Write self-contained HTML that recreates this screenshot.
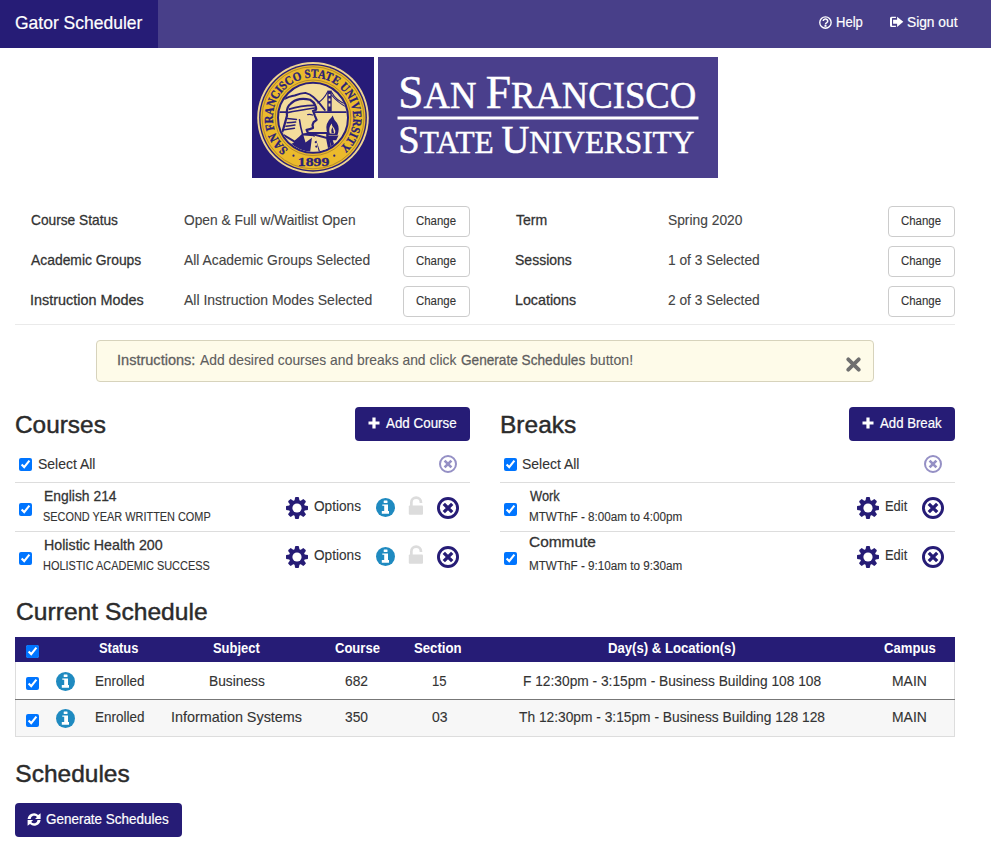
<!DOCTYPE html><html><head><meta charset="utf-8"><title>Gator Scheduler</title><style>
html,body{margin:0;padding:0;background:#fff;width:991px;height:846px;overflow:hidden;position:relative;font-family:"Liberation Sans",sans-serif}
.t{position:absolute;white-space:nowrap;font-family:"Liberation Sans",sans-serif}
.bx{position:absolute;box-sizing:border-box}
</style></head><body>
<div class="bx" style="left:0;top:0;width:991px;height:48px;background:#483f89"></div>
<div class="bx" style="left:0;top:0;width:158px;height:48px;background:#261c76"></div>
<svg style="position:absolute;left:819px;top:15.5px" width="13" height="13" viewBox="0 0 13 13"><circle cx="6.45" cy="6.5" r="5.7" fill="none" stroke="#fff" stroke-width="1.35"/><path d="M4.2 5.0a2.25 2.1 0 1 1 3.3 1.9c-0.7 0.4-1 0.7-1 1.5" fill="none" stroke="#fff" stroke-width="1.6"/><rect x="5.5" y="9.0" width="2" height="1.8" fill="#fff"/></svg>
<svg style="position:absolute;left:890px;top:16px" width="14" height="12" viewBox="0 0 14 12"><path d="M5.9 0.8H1.5Q0 0.8 0 2.3V9.4Q0 10.9 1.5 10.9H5.9V9.7H2.5Q2 9.7 2 9.2V2.5Q2 2 2.5 2H5.9Z" fill="#fff"/><path d="M3.1 3.8H7.1V0.8L13.3 5.85L7.1 10.9V7.8H3.1Z" fill="#fff"/></svg>
<div class="bx" style="left:252px;top:57px;width:466px;height:121px;background:#fff"></div>
<div class="bx" style="left:252px;top:57px;width:122px;height:121px;background:#261a78"></div>
<div class="bx" style="left:378px;top:57px;width:340px;height:121px;background:#4a3f8c"></div>
<svg style="position:absolute;left:252px;top:57px" width="122" height="121" viewBox="0 0 122 121">
<defs><path id="arcT" d="M36.25 92.48A40.2 40.2 0 1 1 88.42 90.2"/><clipPath id="disk"><circle cx="61" cy="60.8" r="34"/></clipPath></defs>
<rect width="122" height="121" fill="#271b78"/>
<circle cx="61" cy="60.8" r="55.8" fill="#f0d592"/>
<circle cx="61" cy="60.8" r="53.9" fill="#2a1f78"/>
<circle cx="61" cy="60.8" r="52.5" fill="#ebba2c"/>
<circle cx="61" cy="60.8" r="51" fill="none" stroke="#9a7430" stroke-width="0.7"/>
<circle cx="61" cy="60.8" r="37.8" fill="none" stroke="#9a7430" stroke-width="0.7"/>
<text font-family="Liberation Serif" font-weight="bold" font-size="12.4" fill="#2a1f78" stroke="#2a1f78" stroke-width="0.35"><textPath href="#arcT" textLength="196" lengthAdjust="spacingAndGlyphs">SAN FRANCISCO STATE UNIVERSITY</textPath></text>
<circle cx="41.5" cy="98.7" r="1.1" fill="#2a1f78"/><circle cx="82.3" cy="98.7" r="1.1" fill="#2a1f78"/>
<text font-family="Liberation Serif" font-weight="bold" font-size="12.5" fill="#2a1f78" stroke="#2a1f78" stroke-width="0.3" x="45.8" y="108.7" textLength="31.5" lengthAdjust="spacingAndGlyphs">1899</text>
<circle cx="61" cy="60.8" r="35" fill="#f3dc9c" stroke="#2a1f78" stroke-width="2"/>
<g clip-path="url(#disk)" fill="none" stroke="#2a1f78" stroke-linejoin="round" stroke-linecap="round">
<path d="M24 55.1H34.5M62.8 55.1H98" stroke-width="1.8"/>
<path d="M30 43Q38 39 42.7 38.5Q49 36 53.4 35.9Q58 37 61.6 40.3Q67 45 72.8 53" stroke-width="1.9"/>
<rect x="75.3" y="33.6" width="4.4" height="21" fill="#2a1f78" stroke="none"/>
<rect x="76.6" y="37" width="1.8" height="2" fill="#f3dc9c" stroke="none"/><rect x="76.6" y="41.5" width="1.8" height="2.4" fill="#f3dc9c" stroke="none"/><rect x="76.6" y="46.5" width="1.8" height="3" fill="#f3dc9c" stroke="none"/>
<path d="M75.5 35Q72 42 65.8 46M79.5 35Q84 44 96 48M79.5 38Q86 46 96 51" stroke-width="1.1"/>
<path d="M28 80L30.9 73.4Q33 66 35 58.6Q34 50 38.6 46.8Q42 43 47.5 42.1Q53 41.5 58.1 42.7Q62 45 63.4 48.6Q64.5 51 64 52.7L61 53.9Q62 56 62.8 58.6Q63.8 60.8 64.6 62.8Q63 64 61.6 65.1Q61 66.5 60.5 68.1Q61 69.5 61 71.1Q58 72.5 54.6 72.8L56 76L75 76L80 100H24Z" fill="#f3dc9c" stroke-width="2.2"/>
<path d="M35.6 55.6Q45 53.6 62.8 51M37.4 52.1Q48 48.6 62.8 48.3" stroke-width="1.7"/>
<path d="M55.7 57.6Q58 56.8 60.5 58" stroke-width="1.3"/>
<path d="M47.5 62.8Q48.5 70 50.4 76.4" stroke-width="1.6"/>
<path d="M35.5 61.5Q40 62 44.5 62.5M35 65.8Q39 65.5 43.7 65M34 69.3Q38 68.7 43 68M32.5 72.8Q37 72 42.5 71.2" stroke-width="1.4"/>
<path d="M30 76Q37 80 42.7 83.5Q47 80 50.4 76.4L56 75.8L62 77L70 100H24Z" fill="#2a1f78" stroke="none"/><path d="M62 77.5L75 81L78 96" stroke-width="2"/>
<path d="M33 80L42 85.5L37 88Z" fill="#f3dc9c" stroke="none"/>
<path d="M51.5 78.5L53.5 85.5L62 79.3Z" fill="#f3dc9c" stroke="none"/>
<path d="M60 80L63.5 79.5L67 96H58Z" fill="#f3dc9c" stroke="none"/>
<circle cx="63.8" cy="85.2" r="1.1" fill="#2a1f78" stroke="none"/><circle cx="64.3" cy="89.6" r="1.1" fill="#2a1f78" stroke="none"/>
<path d="M76.2 78Q72 70 77 63Q80 60 80.6 58.5Q82 63 85 66Q88 71 85.5 78Z" fill="#2a1f78" stroke="none"/>
<path d="M77.8 76.5Q76 71 79.7 66.4Q80 70 82 71Q84 74 83 76.5Z" fill="#f3dc9c" stroke="none"/>
<path d="M79.5 76Q79 72 80.5 70Q81.5 73 82 76Z" fill="#2a1f78" stroke="none"/>
<path d="M74 78.4H86.5L84.2 83.3H76.2Z" fill="#2a1f78" stroke="none"/>
<path d="M79 83L82 92" stroke-width="3.2"/>
</g>
</svg>
<svg style="position:absolute;left:378px;top:57px" width="340" height="121" viewBox="0 0 340 121">
<text font-family="Liberation Serif" fill="#fff" stroke="#fff" stroke-width="0.5" y="50.6" textLength="298" lengthAdjust="spacingAndGlyphs" x="20.3"><tspan font-size="47">S</tspan><tspan font-size="38">AN </tspan><tspan font-size="47">F</tspan><tspan font-size="38">RANCISCO</tspan></text>
<rect x="19.5" y="59.5" width="301" height="3" fill="#fff"/>
<text font-family="Liberation Serif" fill="#fff" stroke="#fff" stroke-width="0.5" y="95.8" textLength="296" lengthAdjust="spacingAndGlyphs" x="20.3"><tspan font-size="39.5">S</tspan><tspan font-size="32">TATE </tspan><tspan font-size="39.5">U</tspan><tspan font-size="32">NIVERSITY</tspan></text>
</svg>
<div class="bx" style="left:403px;top:206px;width:67px;height:31px;border:1px solid #cccccc;border-radius:4px;background:#fff"></div>
<div class="bx" style="left:403px;top:246px;width:67px;height:31px;border:1px solid #cccccc;border-radius:4px;background:#fff"></div>
<div class="bx" style="left:403px;top:286px;width:67px;height:31px;border:1px solid #cccccc;border-radius:4px;background:#fff"></div>
<div class="bx" style="left:888px;top:206px;width:67px;height:31px;border:1px solid #cccccc;border-radius:4px;background:#fff"></div>
<div class="bx" style="left:888px;top:246px;width:67px;height:31px;border:1px solid #cccccc;border-radius:4px;background:#fff"></div>
<div class="bx" style="left:888px;top:286px;width:67px;height:31px;border:1px solid #cccccc;border-radius:4px;background:#fff"></div>
<div class="bx" style="left:15px;top:324px;width:940px;height:1px;background:#eaeaea"></div>
<div class="bx" style="left:96px;top:340px;width:778px;height:42px;background:#fefbe9;border:1px solid #d7d3bc;border-radius:4px"></div>
<svg style="position:absolute;left:846px;top:356.5px" width="15" height="15" viewBox="0 0 15 15"><path d="M2.3 2.3L12.7 12.7M12.7 2.3L2.3 12.7" stroke="#6f6f6f" stroke-width="3.8" stroke-linecap="round"/></svg>
<div class="bx" style="left:355px;top:407px;width:115px;height:34px;background:#261c76;border-radius:4px"></div>
<div class="bx" style="left:849px;top:407px;width:106px;height:34px;background:#261c76;border-radius:4px"></div>
<svg style="position:absolute;left:368px;top:416.5px" width="12" height="12" viewBox="0 0 12 12"><path d="M6 0.5V11.5M0.5 6H11.5" stroke="#fff" stroke-width="3.2"/></svg>
<svg style="position:absolute;left:862px;top:416.5px" width="12" height="12" viewBox="0 0 12 12"><path d="M6 0.5V11.5M0.5 6H11.5" stroke="#fff" stroke-width="3.2"/></svg>
<input type="checkbox" checked style="position:absolute;left:19px;top:458px;width:13px;height:13px;margin:0">
<input type="checkbox" checked style="position:absolute;left:504px;top:458px;width:13px;height:13px;margin:0">
<svg style="position:absolute;left:439.0px;top:455.0px" width="18" height="18" viewBox="-9.0 -9.0 18 18"><circle r="8.0" fill="none" stroke="#9590c5" stroke-width="2.0"/><path d="M-3.4 -3.4L3.4 3.4M3.4 -3.4L-3.4 3.4" stroke="#9590c5" stroke-width="2.7" stroke-linecap="butt"/></svg>
<svg style="position:absolute;left:924.0px;top:455.0px" width="18" height="18" viewBox="-9.0 -9.0 18 18"><circle r="8.0" fill="none" stroke="#9590c5" stroke-width="2.0"/><path d="M-3.4 -3.4L3.4 3.4M3.4 -3.4L-3.4 3.4" stroke="#9590c5" stroke-width="2.7" stroke-linecap="butt"/></svg>
<div class="bx" style="left:15px;top:482px;width:455px;height:1px;background:#dddddd"></div>
<div class="bx" style="left:500px;top:482px;width:455px;height:1px;background:#dddddd"></div>
<div class="bx" style="left:15px;top:531px;width:455px;height:1px;background:#dddddd"></div>
<div class="bx" style="left:500px;top:531px;width:455px;height:1px;background:#dddddd"></div>
<input type="checkbox" checked style="position:absolute;left:19px;top:503px;width:13px;height:13px;margin:0">
<input type="checkbox" checked style="position:absolute;left:504px;top:503px;width:13px;height:13px;margin:0">
<svg style="position:absolute;left:286.3px;top:496.9px" width="22" height="22" viewBox="-11 -11 22 22"><g fill="#261c76"><path d="M-2.7 -6L-1.9 -10.8Q0 -11.3 1.9 -10.8L2.7 -6Z" transform="rotate(0)"/><path d="M-2.7 -6L-1.9 -10.8Q0 -11.3 1.9 -10.8L2.7 -6Z" transform="rotate(45)"/><path d="M-2.7 -6L-1.9 -10.8Q0 -11.3 1.9 -10.8L2.7 -6Z" transform="rotate(90)"/><path d="M-2.7 -6L-1.9 -10.8Q0 -11.3 1.9 -10.8L2.7 -6Z" transform="rotate(135)"/><path d="M-2.7 -6L-1.9 -10.8Q0 -11.3 1.9 -10.8L2.7 -6Z" transform="rotate(180)"/><path d="M-2.7 -6L-1.9 -10.8Q0 -11.3 1.9 -10.8L2.7 -6Z" transform="rotate(225)"/><path d="M-2.7 -6L-1.9 -10.8Q0 -11.3 1.9 -10.8L2.7 -6Z" transform="rotate(270)"/><path d="M-2.7 -6L-1.9 -10.8Q0 -11.3 1.9 -10.8L2.7 -6Z" transform="rotate(315)"/><circle r="8"/></g><circle r="4.6" fill="#fff"/></svg>
<svg style="position:absolute;left:376.0px;top:497.7px" width="19" height="19" viewBox="-9.5 -9.5 19 19"><circle r="9.5" fill="#1f8ac0"/><rect x="-1.8" y="-7" width="3.8" height="2.5" rx="0.5" fill="#fff"/><path d="M-3.2 -3.1H2.5V3.6H3.5V6.2H-3.7V3.6H-1.3V-1.7H-3.2Z" fill="#fff"/></svg>
<svg style="position:absolute;left:408px;top:495px" width="16" height="21" viewBox="0 0 16 21"><path d="M3.35 11V7.45A4.8 4.8 0 0 1 12.95 7.45V8" fill="none" stroke="#dcdcdc" stroke-width="2.7"/><rect x="0.8" y="10.4" width="14.2" height="9.4" rx="1" fill="#dcdcdc"/></svg>
<svg style="position:absolute;left:437.0px;top:497.0px" width="22" height="22" viewBox="-11.0 -11.0 22 22"><circle r="9.55" fill="none" stroke="#261c76" stroke-width="2.9"/><path d="M-4.2 -4.2L4.2 4.2M4.2 -4.2L-4.2 4.2" stroke="#261c76" stroke-width="3.3" stroke-linecap="butt"/></svg>
<svg style="position:absolute;left:857px;top:497.2px" width="22" height="22" viewBox="-11 -11 22 22"><g fill="#261c76"><path d="M-2.7 -6L-1.9 -10.8Q0 -11.3 1.9 -10.8L2.7 -6Z" transform="rotate(0)"/><path d="M-2.7 -6L-1.9 -10.8Q0 -11.3 1.9 -10.8L2.7 -6Z" transform="rotate(45)"/><path d="M-2.7 -6L-1.9 -10.8Q0 -11.3 1.9 -10.8L2.7 -6Z" transform="rotate(90)"/><path d="M-2.7 -6L-1.9 -10.8Q0 -11.3 1.9 -10.8L2.7 -6Z" transform="rotate(135)"/><path d="M-2.7 -6L-1.9 -10.8Q0 -11.3 1.9 -10.8L2.7 -6Z" transform="rotate(180)"/><path d="M-2.7 -6L-1.9 -10.8Q0 -11.3 1.9 -10.8L2.7 -6Z" transform="rotate(225)"/><path d="M-2.7 -6L-1.9 -10.8Q0 -11.3 1.9 -10.8L2.7 -6Z" transform="rotate(270)"/><path d="M-2.7 -6L-1.9 -10.8Q0 -11.3 1.9 -10.8L2.7 -6Z" transform="rotate(315)"/><circle r="8"/></g><circle r="4.6" fill="#fff"/></svg>
<svg style="position:absolute;left:921.6px;top:497.0px" width="22" height="22" viewBox="-11.0 -11.0 22 22"><circle r="9.55" fill="none" stroke="#261c76" stroke-width="2.9"/><path d="M-4.2 -4.2L4.2 4.2M4.2 -4.2L-4.2 4.2" stroke="#261c76" stroke-width="3.3" stroke-linecap="butt"/></svg>
<input type="checkbox" checked style="position:absolute;left:19px;top:552px;width:13px;height:13px;margin:0">
<input type="checkbox" checked style="position:absolute;left:504px;top:552px;width:13px;height:13px;margin:0">
<svg style="position:absolute;left:286.3px;top:545.9px" width="22" height="22" viewBox="-11 -11 22 22"><g fill="#261c76"><path d="M-2.7 -6L-1.9 -10.8Q0 -11.3 1.9 -10.8L2.7 -6Z" transform="rotate(0)"/><path d="M-2.7 -6L-1.9 -10.8Q0 -11.3 1.9 -10.8L2.7 -6Z" transform="rotate(45)"/><path d="M-2.7 -6L-1.9 -10.8Q0 -11.3 1.9 -10.8L2.7 -6Z" transform="rotate(90)"/><path d="M-2.7 -6L-1.9 -10.8Q0 -11.3 1.9 -10.8L2.7 -6Z" transform="rotate(135)"/><path d="M-2.7 -6L-1.9 -10.8Q0 -11.3 1.9 -10.8L2.7 -6Z" transform="rotate(180)"/><path d="M-2.7 -6L-1.9 -10.8Q0 -11.3 1.9 -10.8L2.7 -6Z" transform="rotate(225)"/><path d="M-2.7 -6L-1.9 -10.8Q0 -11.3 1.9 -10.8L2.7 -6Z" transform="rotate(270)"/><path d="M-2.7 -6L-1.9 -10.8Q0 -11.3 1.9 -10.8L2.7 -6Z" transform="rotate(315)"/><circle r="8"/></g><circle r="4.6" fill="#fff"/></svg>
<svg style="position:absolute;left:376.0px;top:546.7px" width="19" height="19" viewBox="-9.5 -9.5 19 19"><circle r="9.5" fill="#1f8ac0"/><rect x="-1.8" y="-7" width="3.8" height="2.5" rx="0.5" fill="#fff"/><path d="M-3.2 -3.1H2.5V3.6H3.5V6.2H-3.7V3.6H-1.3V-1.7H-3.2Z" fill="#fff"/></svg>
<svg style="position:absolute;left:408px;top:544px" width="16" height="21" viewBox="0 0 16 21"><path d="M3.35 11V7.45A4.8 4.8 0 0 1 12.95 7.45V8" fill="none" stroke="#dcdcdc" stroke-width="2.7"/><rect x="0.8" y="10.4" width="14.2" height="9.4" rx="1" fill="#dcdcdc"/></svg>
<svg style="position:absolute;left:437.0px;top:546.0px" width="22" height="22" viewBox="-11.0 -11.0 22 22"><circle r="9.55" fill="none" stroke="#261c76" stroke-width="2.9"/><path d="M-4.2 -4.2L4.2 4.2M4.2 -4.2L-4.2 4.2" stroke="#261c76" stroke-width="3.3" stroke-linecap="butt"/></svg>
<svg style="position:absolute;left:857px;top:546.2px" width="22" height="22" viewBox="-11 -11 22 22"><g fill="#261c76"><path d="M-2.7 -6L-1.9 -10.8Q0 -11.3 1.9 -10.8L2.7 -6Z" transform="rotate(0)"/><path d="M-2.7 -6L-1.9 -10.8Q0 -11.3 1.9 -10.8L2.7 -6Z" transform="rotate(45)"/><path d="M-2.7 -6L-1.9 -10.8Q0 -11.3 1.9 -10.8L2.7 -6Z" transform="rotate(90)"/><path d="M-2.7 -6L-1.9 -10.8Q0 -11.3 1.9 -10.8L2.7 -6Z" transform="rotate(135)"/><path d="M-2.7 -6L-1.9 -10.8Q0 -11.3 1.9 -10.8L2.7 -6Z" transform="rotate(180)"/><path d="M-2.7 -6L-1.9 -10.8Q0 -11.3 1.9 -10.8L2.7 -6Z" transform="rotate(225)"/><path d="M-2.7 -6L-1.9 -10.8Q0 -11.3 1.9 -10.8L2.7 -6Z" transform="rotate(270)"/><path d="M-2.7 -6L-1.9 -10.8Q0 -11.3 1.9 -10.8L2.7 -6Z" transform="rotate(315)"/><circle r="8"/></g><circle r="4.6" fill="#fff"/></svg>
<svg style="position:absolute;left:921.6px;top:546.0px" width="22" height="22" viewBox="-11.0 -11.0 22 22"><circle r="9.55" fill="none" stroke="#261c76" stroke-width="2.9"/><path d="M-4.2 -4.2L4.2 4.2M4.2 -4.2L-4.2 4.2" stroke="#261c76" stroke-width="3.3" stroke-linecap="butt"/></svg>
<div class="bx" style="left:15px;top:637px;width:940px;height:100px;border:1px solid #dddddd;background:#fff"></div>
<div class="bx" style="left:15px;top:637px;width:940px;height:25px;background:#261c76"></div>
<div class="bx" style="left:15px;top:699px;width:940px;height:1px;background:#777"></div>
<div class="bx" style="left:16px;top:700px;width:938px;height:36px;background:#f7f7f7"></div>
<input type="checkbox" checked style="position:absolute;left:26px;top:645px;width:13px;height:13px;margin:0">
<input type="checkbox" checked style="position:absolute;left:26px;top:677px;width:13px;height:13px;margin:0">
<input type="checkbox" checked style="position:absolute;left:26px;top:714px;width:13px;height:13px;margin:0">
<svg style="position:absolute;left:56.0px;top:671.7px" width="19" height="19" viewBox="-9.5 -9.5 19 19"><circle r="9.5" fill="#1f8ac0"/><rect x="-1.8" y="-7" width="3.8" height="2.5" rx="0.5" fill="#fff"/><path d="M-3.2 -3.1H2.5V3.6H3.5V6.2H-3.7V3.6H-1.3V-1.7H-3.2Z" fill="#fff"/></svg>
<svg style="position:absolute;left:56.0px;top:708.7px" width="19" height="19" viewBox="-9.5 -9.5 19 19"><circle r="9.5" fill="#1f8ac0"/><rect x="-1.8" y="-7" width="3.8" height="2.5" rx="0.5" fill="#fff"/><path d="M-3.2 -3.1H2.5V3.6H3.5V6.2H-3.7V3.6H-1.3V-1.7H-3.2Z" fill="#fff"/></svg>
<div class="bx" style="left:15px;top:803px;width:167px;height:34px;background:#261c76;border-radius:4px"></div>
<svg style="position:absolute;left:27px;top:812.5px" width="14" height="13" viewBox="0 0 14 13"><path d="M0.6 6.1A6.5 6.5 0 0 1 11.2 1.9L13.6 0.3V5.9H8.1L10 4.1A3.5 3.5 0 0 0 3.7 6.1Z" fill="#fff"/><path d="M13.6 6.9A6.5 6.5 0 0 1 3 11.1L0.6 12.7V7.1H6.1L4.2 8.9A3.5 3.5 0 0 0 10.5 6.9Z" fill="#fff"/></svg>
<div class="t" id="brand" style="left:15.40px;top:14px;font-size:18.5px;line-height:18.5px;font-weight:400;color:#fff;letter-spacing:0.000px;-webkit-text-stroke:0.2px #fff;transform:scaleX(0.9452);transform-origin:0 0">Gator Scheduler</div>
<div class="t" id="help" style="left:836.10px;top:15px;font-size:14.5px;line-height:14.5px;font-weight:400;color:#fff;letter-spacing:0.000px;-webkit-text-stroke:0.2px #fff;transform:scaleX(0.8995);transform-origin:0 0">Help</div>
<div class="t" id="signout" style="left:906.80px;top:15px;font-size:14.5px;line-height:14.5px;font-weight:400;color:#fff;letter-spacing:0.000px;-webkit-text-stroke:0.2px #fff;transform:scaleX(0.9483);transform-origin:0 0">Sign out</div>
<div class="t" id="l1" style="left:30.50px;top:213px;font-size:14.5px;line-height:14.5px;font-weight:400;color:#333;letter-spacing:0.000px;-webkit-text-stroke:0.28px #333;transform:scaleX(0.9463);transform-origin:0 0">Course Status</div>
<div class="t" id="l2" style="left:31.00px;top:253px;font-size:14.5px;line-height:14.5px;font-weight:400;color:#333;letter-spacing:0.000px;-webkit-text-stroke:0.28px #333;transform:scaleX(0.9569);transform-origin:0 0">Academic Groups</div>
<div class="t" id="l3" style="left:30.00px;top:293px;font-size:14.5px;line-height:14.5px;font-weight:400;color:#333;letter-spacing:0.000px;-webkit-text-stroke:0.28px #333;transform:scaleX(0.9931);transform-origin:0 0">Instruction Modes</div>
<div class="t" id="v1" style="left:183.50px;top:213px;font-size:14.5px;line-height:14.5px;font-weight:400;color:#444;letter-spacing:0.000px;-webkit-text-stroke:0.12px #444;transform:scaleX(0.9489);transform-origin:0 0">Open &amp; Full w/Waitlist Open</div>
<div class="t" id="v2" style="left:184.00px;top:253px;font-size:14.5px;line-height:14.5px;font-weight:400;color:#444;letter-spacing:0.000px;-webkit-text-stroke:0.12px #444;transform:scaleX(0.9549);transform-origin:0 0">All Academic Groups Selected</div>
<div class="t" id="v3" style="left:184.00px;top:293px;font-size:14.5px;line-height:14.5px;font-weight:400;color:#444;letter-spacing:0.000px;-webkit-text-stroke:0.12px #444;transform:scaleX(0.9652);transform-origin:0 0">All Instruction Modes Selected</div>
<div class="t" id="l4" style="left:516.00px;top:213px;font-size:14.5px;line-height:14.5px;font-weight:400;color:#333;letter-spacing:0.000px;-webkit-text-stroke:0.28px #333;transform:scaleX(0.9697);transform-origin:0 0">Term</div>
<div class="t" id="l5" style="left:515.00px;top:253px;font-size:14.5px;line-height:14.5px;font-weight:400;color:#333;letter-spacing:0.000px;-webkit-text-stroke:0.28px #333;transform:scaleX(0.9661);transform-origin:0 0">Sessions</div>
<div class="t" id="l6" style="left:515.00px;top:293px;font-size:14.5px;line-height:14.5px;font-weight:400;color:#333;letter-spacing:0.000px;-webkit-text-stroke:0.28px #333;transform:scaleX(0.9840);transform-origin:0 0">Locations</div>
<div class="t" id="v4" style="left:668.00px;top:213px;font-size:14.5px;line-height:14.5px;font-weight:400;color:#444;letter-spacing:0.000px;-webkit-text-stroke:0.12px #444;transform:scaleX(0.9513);transform-origin:0 0">Spring 2020</div>
<div class="t" id="v5" style="left:668.00px;top:253px;font-size:14.5px;line-height:14.5px;font-weight:400;color:#444;letter-spacing:0.000px;-webkit-text-stroke:0.12px #444;transform:scaleX(0.9480);transform-origin:0 0">1 of 3 Selected</div>
<div class="t" id="v6" style="left:668.00px;top:293px;font-size:14.5px;line-height:14.5px;font-weight:400;color:#444;letter-spacing:0.000px;-webkit-text-stroke:0.12px #444;transform:scaleX(0.9480);transform-origin:0 0">2 of 3 Selected</div>
<div class="t" id="c1" style="left:416.40px;top:215px;font-size:12px;line-height:12px;font-weight:400;color:#333;letter-spacing:0.000px;-webkit-text-stroke:0.12px #333;transform:scaleX(0.9524);transform-origin:0 0">Change</div>
<div class="t" id="c2" style="left:416.40px;top:255px;font-size:12px;line-height:12px;font-weight:400;color:#333;letter-spacing:0.000px;-webkit-text-stroke:0.12px #333;transform:scaleX(0.9524);transform-origin:0 0">Change</div>
<div class="t" id="c3" style="left:416.40px;top:295px;font-size:12px;line-height:12px;font-weight:400;color:#333;letter-spacing:0.000px;-webkit-text-stroke:0.12px #333;transform:scaleX(0.9524);transform-origin:0 0">Change</div>
<div class="t" id="c4" style="left:901.40px;top:215px;font-size:12px;line-height:12px;font-weight:400;color:#333;letter-spacing:0.000px;-webkit-text-stroke:0.12px #333;transform:scaleX(0.9524);transform-origin:0 0">Change</div>
<div class="t" id="c5" style="left:901.40px;top:255px;font-size:12px;line-height:12px;font-weight:400;color:#333;letter-spacing:0.000px;-webkit-text-stroke:0.12px #333;transform:scaleX(0.9524);transform-origin:0 0">Change</div>
<div class="t" id="c6" style="left:901.40px;top:295px;font-size:12px;line-height:12px;font-weight:400;color:#333;letter-spacing:0.000px;-webkit-text-stroke:0.12px #333;transform:scaleX(0.9524);transform-origin:0 0">Change</div>
<div class="t" id="al1" style="left:116.50px;top:353px;font-size:14.5px;line-height:14.5px;font-weight:400;color:#5e5e5e;letter-spacing:0.000px;-webkit-text-stroke:0.28px #5e5e5e;transform:scaleX(1.0027);transform-origin:0 0">Instructions:</div>
<div class="t" id="al2" style="left:199.50px;top:353px;font-size:14.5px;line-height:14.5px;font-weight:400;color:#5e5e5e;letter-spacing:0.000px;-webkit-text-stroke:0.12px #5e5e5e;transform:scaleX(0.9551);transform-origin:0 0">Add desired courses and breaks and click</div>
<div class="t" id="al3" style="left:461.00px;top:353px;font-size:14.5px;line-height:14.5px;font-weight:400;color:#5e5e5e;letter-spacing:0.000px;-webkit-text-stroke:0.28px #5e5e5e;transform:scaleX(0.9396);transform-origin:0 0">Generate Schedules</div>
<div class="t" id="al4" style="left:589.50px;top:353px;font-size:14.5px;line-height:14.5px;font-weight:400;color:#5e5e5e;letter-spacing:0.000px;-webkit-text-stroke:0.12px #5e5e5e;transform:scaleX(0.9726);transform-origin:0 0">button!</div>
<div class="t" id="h_courses" style="left:15.30px;top:413px;font-size:24.5px;line-height:24.5px;font-weight:400;color:#2b2b2b;letter-spacing:0.000px;-webkit-text-stroke:0.45px #2b2b2b;transform:scaleX(0.9956);transform-origin:0 0">Courses</div>
<div class="t" id="h_breaks" style="left:500.00px;top:413px;font-size:24.5px;line-height:24.5px;font-weight:400;color:#2b2b2b;letter-spacing:0.000px;-webkit-text-stroke:0.45px #2b2b2b;transform:scaleX(1.0001);transform-origin:0 0">Breaks</div>
<div class="t" id="sa1" style="left:37.70px;top:457px;font-size:14.5px;line-height:14.5px;font-weight:400;color:#333;letter-spacing:0.000px;-webkit-text-stroke:0.12px #333;transform:scaleX(0.9628);transform-origin:0 0">Select All</div>
<div class="t" id="sa2" style="left:521.80px;top:457px;font-size:14.5px;line-height:14.5px;font-weight:400;color:#333;letter-spacing:0.000px;-webkit-text-stroke:0.12px #333;transform:scaleX(0.9628);transform-origin:0 0">Select All</div>
<div class="t" id="addc" style="left:386.00px;top:416px;font-size:14.5px;line-height:14.5px;font-weight:400;color:#fff;letter-spacing:0.000px;-webkit-text-stroke:0.2px #fff;transform:scaleX(0.9231);transform-origin:0 0">Add Course</div>
<div class="t" id="addb" style="left:880.20px;top:416px;font-size:14.5px;line-height:14.5px;font-weight:400;color:#fff;letter-spacing:0.000px;-webkit-text-stroke:0.2px #fff;transform:scaleX(0.9102);transform-origin:0 0">Add Break</div>
<div class="t" id="ct1" style="left:43.70px;top:489px;font-size:14.5px;line-height:14.5px;font-weight:400;color:#333;letter-spacing:0.000px;-webkit-text-stroke:0.28px #333;transform:scaleX(0.9580);transform-origin:0 0">English 214</div>
<div class="t" id="cs1" style="left:43.10px;top:511px;font-size:12.5px;line-height:12.5px;font-weight:400;color:#333;letter-spacing:0.000px;-webkit-text-stroke:0.12px #333;transform:scaleX(0.8729);transform-origin:0 0">SECOND YEAR WRITTEN COMP</div>
<div class="t" id="ct2" style="left:43.70px;top:538px;font-size:14.5px;line-height:14.5px;font-weight:400;color:#333;letter-spacing:0.000px;-webkit-text-stroke:0.28px #333;transform:scaleX(0.9818);transform-origin:0 0">Holistic Health 200</div>
<div class="t" id="cs2" style="left:43.10px;top:560px;font-size:12.5px;line-height:12.5px;font-weight:400;color:#333;letter-spacing:0.000px;-webkit-text-stroke:0.12px #333;transform:scaleX(0.8769);transform-origin:0 0">HOLISTIC ACADEMIC SUCCESS</div>
<div class="t" id="opt1" style="left:314.20px;top:499px;font-size:14.5px;line-height:14.5px;font-weight:400;color:#333;letter-spacing:0.000px;-webkit-text-stroke:0.12px #333;transform:scaleX(0.9402);transform-origin:0 0">Options</div>
<div class="t" id="opt2" style="left:314.20px;top:548px;font-size:14.5px;line-height:14.5px;font-weight:400;color:#333;letter-spacing:0.000px;-webkit-text-stroke:0.12px #333;transform:scaleX(0.9402);transform-origin:0 0">Options</div>
<div class="t" id="bt1" style="left:529.70px;top:489px;font-size:14.5px;line-height:14.5px;font-weight:400;color:#333;letter-spacing:0.000px;-webkit-text-stroke:0.28px #333;transform:scaleX(0.8862);transform-origin:0 0">Work</div>
<div class="t" id="bs1" style="left:528.70px;top:511px;font-size:12px;line-height:12px;font-weight:400;color:#333;letter-spacing:0.000px;-webkit-text-stroke:0.12px #333;transform:scaleX(0.9733);transform-origin:0 0">MTWThF - 8:00am to 4:00pm</div>
<div class="t" id="bt2" style="left:528.70px;top:535px;font-size:14.5px;line-height:14.5px;font-weight:400;color:#333;letter-spacing:0.000px;-webkit-text-stroke:0.28px #333;transform:scaleX(1.0635);transform-origin:0 0">Commute</div>
<div class="t" id="bs2" style="left:528.70px;top:560px;font-size:12px;line-height:12px;font-weight:400;color:#333;letter-spacing:0.000px;-webkit-text-stroke:0.12px #333;transform:scaleX(0.9733);transform-origin:0 0">MTWThF - 9:10am to 9:30am</div>
<div class="t" id="edit1" style="left:884.70px;top:499px;font-size:14.5px;line-height:14.5px;font-weight:400;color:#333;letter-spacing:0.000px;-webkit-text-stroke:0.12px #333;transform:scaleX(0.8899);transform-origin:0 0">Edit</div>
<div class="t" id="edit2" style="left:884.70px;top:548px;font-size:14.5px;line-height:14.5px;font-weight:400;color:#333;letter-spacing:0.000px;-webkit-text-stroke:0.12px #333;transform:scaleX(0.8899);transform-origin:0 0">Edit</div>
<div class="t" id="h_cur" style="left:15.50px;top:600px;font-size:24.5px;line-height:24.5px;font-weight:400;color:#2b2b2b;letter-spacing:0.000px;-webkit-text-stroke:0.45px #2b2b2b;transform:scaleX(1.0053);transform-origin:0 0">Current Schedule</div>
<div class="t" id="th1" style="left:98.90px;top:641px;font-size:14px;line-height:14px;font-weight:700;color:#fff;letter-spacing:0.000px;transform:scaleX(0.9210);transform-origin:0 0">Status</div>
<div class="t" id="th2" style="left:212.90px;top:641px;font-size:14px;line-height:14px;font-weight:700;color:#fff;letter-spacing:0.000px;transform:scaleX(0.9235);transform-origin:0 0">Subject</div>
<div class="t" id="th3" style="left:334.50px;top:641px;font-size:14px;line-height:14px;font-weight:700;color:#fff;letter-spacing:0.000px;transform:scaleX(0.9309);transform-origin:0 0">Course</div>
<div class="t" id="th4" style="left:414.30px;top:641px;font-size:14px;line-height:14px;font-weight:700;color:#fff;letter-spacing:0.000px;transform:scaleX(0.9414);transform-origin:0 0">Section</div>
<div class="t" id="th5" style="left:608.20px;top:641px;font-size:14px;line-height:14px;font-weight:700;color:#fff;letter-spacing:0.000px;transform:scaleX(0.9382);transform-origin:0 0">Day(s) &amp; Location(s)</div>
<div class="t" id="th6" style="left:883.70px;top:641px;font-size:14px;line-height:14px;font-weight:700;color:#fff;letter-spacing:0.000px;transform:scaleX(0.9360);transform-origin:0 0">Campus</div>
<div class="t" id="r1a" style="left:94.70px;top:674px;font-size:14.5px;line-height:14.5px;font-weight:400;color:#333;letter-spacing:0.000px;-webkit-text-stroke:0.12px #333;transform:scaleX(0.9284);transform-origin:0 0">Enrolled</div>
<div class="t" id="r1b" style="left:208.60px;top:674px;font-size:14.5px;line-height:14.5px;font-weight:400;color:#333;letter-spacing:0.000px;-webkit-text-stroke:0.12px #333;transform:scaleX(0.9486);transform-origin:0 0">Business</div>
<div class="t" id="r1c" style="left:345.40px;top:674px;font-size:14.5px;line-height:14.5px;font-weight:400;color:#333;letter-spacing:0.000px;-webkit-text-stroke:0.12px #333;transform:scaleX(0.9508);transform-origin:0 0">682</div>
<div class="t" id="r1d" style="left:431.60px;top:674px;font-size:14.5px;line-height:14.5px;font-weight:400;color:#333;letter-spacing:0.000px;-webkit-text-stroke:0.12px #333;transform:scaleX(0.9026);transform-origin:0 0">15</div>
<div class="t" id="r1e" style="left:523.10px;top:674px;font-size:14.5px;line-height:14.5px;font-weight:400;color:#333;letter-spacing:0.000px;-webkit-text-stroke:0.12px #333;transform:scaleX(0.9484);transform-origin:0 0">F 12:30pm - 3:15pm - Business Building 108 108</div>
<div class="t" id="r1f" style="left:892.10px;top:674px;font-size:14.5px;line-height:14.5px;font-weight:400;color:#333;letter-spacing:0.000px;-webkit-text-stroke:0.12px #333;transform:scaleX(0.9606);transform-origin:0 0">MAIN</div>
<div class="t" id="r2a" style="left:94.70px;top:710px;font-size:14.5px;line-height:14.5px;font-weight:400;color:#333;letter-spacing:0.000px;-webkit-text-stroke:0.12px #333;transform:scaleX(0.9284);transform-origin:0 0">Enrolled</div>
<div class="t" id="r2b" style="left:170.50px;top:710px;font-size:14.5px;line-height:14.5px;font-weight:400;color:#333;letter-spacing:0.000px;-webkit-text-stroke:0.12px #333;transform:scaleX(0.9910);transform-origin:0 0">Information Systems</div>
<div class="t" id="r2c" style="left:345.40px;top:710px;font-size:14.5px;line-height:14.5px;font-weight:400;color:#333;letter-spacing:0.000px;-webkit-text-stroke:0.12px #333;transform:scaleX(0.9508);transform-origin:0 0">350</div>
<div class="t" id="r2d" style="left:431.60px;top:710px;font-size:14.5px;line-height:14.5px;font-weight:400;color:#333;letter-spacing:0.000px;-webkit-text-stroke:0.12px #333;transform:scaleX(0.9628);transform-origin:0 0">03</div>
<div class="t" id="r2e" style="left:519.20px;top:710px;font-size:14.5px;line-height:14.5px;font-weight:400;color:#333;letter-spacing:0.000px;-webkit-text-stroke:0.12px #333;transform:scaleX(0.9491);transform-origin:0 0">Th 12:30pm - 3:15pm - Business Building 128 128</div>
<div class="t" id="r2f" style="left:892.10px;top:710px;font-size:14.5px;line-height:14.5px;font-weight:400;color:#333;letter-spacing:0.000px;-webkit-text-stroke:0.12px #333;transform:scaleX(0.9606);transform-origin:0 0">MAIN</div>
<div class="t" id="h_sch" style="left:15.30px;top:762px;font-size:24.5px;line-height:24.5px;font-weight:400;color:#2b2b2b;letter-spacing:0.000px;-webkit-text-stroke:0.45px #2b2b2b;transform:scaleX(1.0000);transform-origin:0 0">Schedules</div>
<div class="t" id="gen" style="left:46.20px;top:812px;font-size:14.5px;line-height:14.5px;font-weight:400;color:#fff;letter-spacing:0.000px;-webkit-text-stroke:0.2px #fff;transform:scaleX(0.9278);transform-origin:0 0">Generate Schedules</div>
</body></html>
